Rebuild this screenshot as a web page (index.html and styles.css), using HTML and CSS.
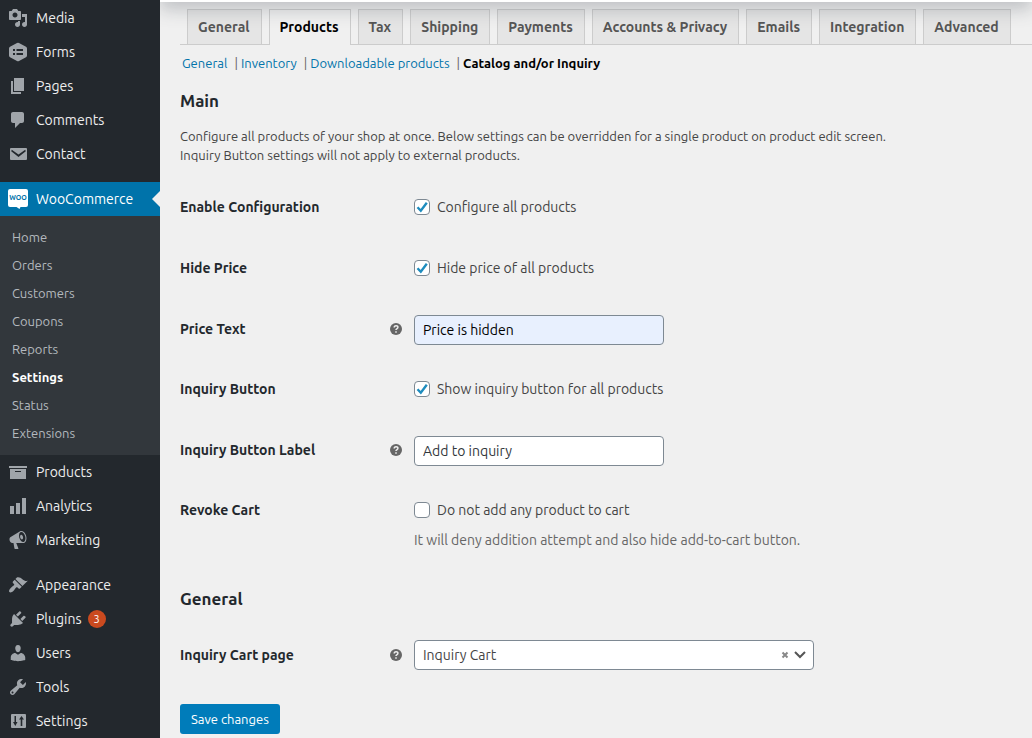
FILE: index.html
```html
<!DOCTYPE html>
<html lang="en">
<head>
<meta charset="utf-8">
<title>WooCommerce settings</title>
<link rel="stylesheet" href="styles.css">
</head>
<body>
<div class="layout">
  <nav class="sidebar" aria-label="Main menu">
    <ul class="menu">
      <li><a class="menu-link" href="#"><svg class="icon" viewBox="0 0 20 20"><path d="M13 11V4c0-.55-.45-1-1-1h-1.67L9 1H5L3.67 3H2c-.55 0-1 .45-1 1v7c0 .55.45 1 1 1h10c.55 0 1-.45 1-1zM7 4.5c1.38 0 2.5 1.12 2.5 2.5S8.38 9.5 7 9.5 4.5 8.38 4.5 7 5.62 4.5 7 4.5zM14 6h5v10.5c0 1.38-1.12 2.5-2.5 2.5S14 17.88 14 16.5s1.12-2.5 2.5-2.5c.17 0 .34.02.5.05V9h-3V6zm-4 8.05V13h2v3.5c0 1.38-1.12 2.5-2.5 2.5S7 17.88 7 16.5 8.12 14 9.5 14c.17 0 .34.02.5.05z"/></svg>Media</a></li>
      <li><a class="menu-link" href="#"><svg class="icon" viewBox="0 0 20 20"><path fill-rule="evenodd" d="M9 1.1q1-.5 2 0l7 3.6q1 .6 1 1.7v7.2q0 1.1-1 1.7l-7 3.6q-1 .5-2 0l-7-3.6q-1-.6-1-1.7V6.400q0-1.100 1-1.700zM5 7v2h2V7zm3.500 0v2H15V7zM5 11v2h2v-2zm3.500 0v2H15v-2z"/></svg>Forms</a></li>
      <li><a class="menu-link" href="#"><svg class="icon" viewBox="0 0 20 20"><path d="M6 15V2h10v13H6zm-1 1h8v2H3V5h2v11z"/></svg>Pages</a></li>
      <li><a class="menu-link" href="#"><svg class="icon" viewBox="0 0 20 20"><path d="M5 2h9c1.100 0 2 .9 2 2v7c0 1.100-.9 2-2 2h-2l-5 5v-5H5c-1.100 0-2-.9-2-2V4c0-1.100.9-2 2-2z"/></svg>Comments</a></li>
      <li><a class="menu-link" href="#"><svg class="icon" viewBox="0 0 20 20"><path fill-rule="evenodd" d="M3 4h15q1 0 1 1v10q0 1-1 1H3q-1 0-1-1V5q0-1 1-1zm.8 1.800-.6 1.500 7.300 5.700 7.300-5.700-.6-1.500-6.700 4.700z"/></svg>Contact</a></li>
      <li class="separated"><a class="menu-link current" href="#"><svg class="icon" viewBox="0 0 20 20"><path d="M2 0h16q2 0 2 2v14q0 2-2 2h-5.500l-1 2-3-2H2q-2 0-2-2V2q0-2 2-2z"/><text class="woo" x="10" y="11" text-anchor="middle">WOO</text></svg>WooCommerce</a>
        <ul class="submenu">
          <li><a href="#">Home</a></li>
          <li><a href="#">Orders</a></li>
          <li><a href="#">Customers</a></li>
          <li><a href="#">Coupons</a></li>
          <li><a href="#">Reports</a></li>
          <li><a class="active" href="#">Settings</a></li>
          <li><a href="#">Status</a></li>
          <li><a href="#">Extensions</a></li>
        </ul>
      </li>
      <li><a class="menu-link" href="#"><svg class="icon" viewBox="0 0 20 20"><path d="M19 4v2H1V4h18zM2 7h16v10H2V7zm11 3V9H7v1h6z"/></svg>Products</a></li>
      <li><a class="menu-link" href="#"><svg class="icon" viewBox="0 0 20 20"><path d="M18 18V2h-4v16h4zm-6 0V7H8v11h4zm-6 0v-8H2v8h4z"/></svg>Analytics</a></li>
      <li><a class="menu-link" href="#"><svg class="icon" viewBox="0 0 20 20"><path d="M18.150 5.940c.46 1.620.38 3.220-.02 4.480-.42 1.280-1.260 2.180-2.300 2.480-.16.06-.26.06-.4.06-.06.02-.12.02-.18.02-.06.02-.14.02-.22.02h-6.800l2.220 5.500c.02.14-.06.26-.14.34-.08.1-.24.16-.34.16H6.950c-.1 0-.26-.06-.34-.16-.08-.08-.16-.2-.14-.34l-1-5.500H4.250l-.02-.02c-.5.06-1.080-.18-1.540-.62s-.88-1.080-1.060-1.880c-.24-.8-.2-1.560-.02-2.200.18-.62.58-1.080 1.060-1.300l.02-.02 9-5.400c.1-.06.18-.1.24-.16.06-.04.14-.08.24-.12.16-.08.28-.12.5-.18 1.040-.3 2.240.1 3.220.98s1.840 2.240 2.260 3.860zm-2.580 5.980h-.02c.4-.1.74-.34 1.040-.7.58-.7.86-1.760.86-3.040 0-.64-.1-1.300-.28-1.980-.34-1.360-1.020-2.500-1.780-3.240s-1.680-1.100-2.460-.88c-.82.22-1.400.96-1.700 2-.32 1.040-.28 2.360.06 3.720.38 1.360 1 2.500 1.800 3.240.78.74 1.620 1.100 2.480.88zm-2.540-7.080c.22-.04.42-.02.62.04.38.16.76.48 1.020 1s.42 1.200.42 1.780c0 .3-.04.56-.12.8-.18.48-.44.84-.86.94-.34.1-.8-.06-1.140-.4s-.64-.86-.78-1.500c-.18-.62-.12-1.240.02-1.720s.48-.84.82-.94z"/></svg>Marketing</a></li>
      <li class="separated"><a class="menu-link" href="#"><svg class="icon" viewBox="0 0 20 20"><path d="M14.480 11.060L7.410 3.990l1.500-1.500c.5-.56 2.300-.47 3.510.32 1.210.8 1.430 1.280 2.910 2.100 1.180.64 2.450 1.260 4.450.85zm-.71.71L6.700 4.700 4.930 6.470c-.39.39-.39 1.020 0 1.410l1.060 1.060c.39.39.39 1.030 0 1.420-.6.6-1.430 1.110-2.210 1.690-.35.26-.7.53-1.010.84C1.430 14.230.4 16.080 1.400 17.070c.99 1 2.840-.03 4.180-1.360.31-.31.58-.66.85-1.020.57-.78 1.080-1.610 1.690-2.210.39-.39 1.020-.39 1.410 0l1.060 1.060c.39.39 1.020.39 1.410 0z"/></svg>Appearance</a></li>
      <li><a class="menu-link" href="#"><svg class="icon" viewBox="0 0 20 20"><path d="M13.110 4.360L9.870 7.600 8 5.730l3.240-3.240c.35-.34 1.050-.2 1.560.32.52.51.66 1.210.31 1.550zm-8 1.770l.91-1.120 9.010 9.010-1.190.84c-.71.71-2.630 1.160-3.820 1.160H6.140L4.900 17.260c-.59.59-1.540.59-2.120 0-.59-.58-.59-1.530 0-2.120l1.240-1.240v-3.880c0-1.130.4-3.190 1.090-3.890zm7.260 3.970l3.240-3.240c.34-.35 1.040-.21 1.550.31.52.51.66 1.210.31 1.550l-3.240 3.250z"/></svg>Plugins<span class="count">3</span></a></li>
      <li><a class="menu-link" href="#"><svg class="icon" viewBox="0 0 20 20"><path d="M10 9.250c-2.270 0-2.730-3.440-2.730-3.440C7 4.020 7.820 2 9.970 2c2.160 0 2.980 2.020 2.710 3.810 0 0-.41 3.440-2.680 3.440zm0 2.570L12.720 10c2.390 0 4.520 2.330 4.520 4.530v2.490s-3.650 1.130-7.240 1.130c-3.650 0-7.240-1.130-7.240-1.130v-2.490c0-2.250 1.940-4.480 4.470-4.480z"/></svg>Users</a></li>
      <li><a class="menu-link" href="#"><svg class="icon" viewBox="0 0 20 20"><path d="M16.680 9.770c-1.340 1.340-3.300 1.670-4.950.99l-5.410 6.520c-.99.99-2.590.99-3.580 0s-.99-2.590 0-3.570l6.520-5.420c-.68-1.650-.35-3.610.99-4.950 1.280-1.280 3.120-1.620 4.720-1.060l-2.890 2.890 2.820 2.820 2.860-2.870c.53 1.580.18 3.390-1.080 4.650zM3.810 16.210c.4.39 1.040.39 1.430 0 .4-.4.4-1.040 0-1.430-.39-.4-1.030-.4-1.430 0-.39.39-.39 1.030 0 1.430z"/></svg>Tools</a></li>
      <li><a class="menu-link" href="#"><svg class="icon" viewBox="0 0 20 20"><path fill-rule="evenodd" d="M4 3h13q1 0 1 1v12q0 1-1 1H4q-1 0-1-1V4q0-1 1-1zm2.500 2v6H5l2.300 4L9.500 11H8V5zm6.200 10h1.600V8.500H16L13.500 5 11 8.500h1.700z"/></svg>Settings</a></li>
    </ul>
  </nav>

  <div class="page">
    <div class="topbar"></div>
    <main class="content">
      <nav class="tabs" aria-label="Settings sections">
        <a class="tab" href="#">General</a>
        <a class="tab selected" href="#">Products</a>
        <a class="tab" href="#">Tax</a>
        <a class="tab" href="#">Shipping</a>
        <a class="tab" href="#">Payments</a>
        <a class="tab" href="#">Accounts &amp; Privacy</a>
        <a class="tab" href="#">Emails</a>
        <a class="tab" href="#">Integration</a>
        <a class="tab" href="#">Advanced</a>
      </nav>
      <ul class="subnav">
        <li><a href="#">General</a></li>
        <li><a href="#">Inventory</a></li>
        <li><a href="#">Downloadable products</a></li>
        <li><a class="active" href="#">Catalog and/or Inquiry</a></li>
      </ul>

      <form class="settings">
        <h2>Main</h2>
        <p class="intro">Configure all products of your shop at once. Below settings can be overridden for a single product on product edit screen.<br>Inquiry Button settings will not apply to external products.</p>

        <div class="rows">
          <div class="row">
            <span class="name">Enable Configuration</span>
            <label class="check"><input type="checkbox" checked>Configure all products</label>
          </div>
          <div class="row">
            <span class="name">Hide Price</span>
            <label class="check"><input type="checkbox" checked>Hide price of all products</label>
          </div>
          <div class="row field">
            <label class="name" for="price-text">Price Text</label>
            <svg class="help" viewBox="0 0 14 14"><circle cx="7" cy="7" r="6"/><path d="M5.200 5.600q0-1.900 1.900-1.900t1.800 1.600q0 1-1.100 1.500-.8.400-.8 1.200M7 9.300v1.400"/></svg>
            <input class="text filled" id="price-text" type="text" value="Price is hidden">
          </div>
          <div class="row">
            <span class="name">Inquiry Button</span>
            <label class="check"><input type="checkbox" checked>Show inquiry button for all products</label>
          </div>
          <div class="row field">
            <label class="name" for="button-label">Inquiry Button Label</label>
            <svg class="help" viewBox="0 0 14 14"><circle cx="7" cy="7" r="6"/><path d="M5.200 5.600q0-1.900 1.900-1.900t1.800 1.600q0 1-1.100 1.500-.8.400-.8 1.200M7 9.300v1.400"/></svg>
            <input class="text" id="button-label" type="text" value="Add to inquiry">
          </div>
          <div class="row noted">
            <span class="name">Revoke Cart</span>
            <label class="check"><input type="checkbox">Do not add any product to cart</label>
          </div>
        </div>
        <p class="note">It will deny addition attempt and also hide add-to-cart button.</p>

        <h2>General</h2>
        <div class="row cart">
          <label class="name" for="cart-page">Inquiry Cart page</label>
          <svg class="help" viewBox="0 0 14 14"><circle cx="7" cy="7" r="6"/><path d="M5.200 5.600q0-1.900 1.900-1.900t1.800 1.600q0 1-1.100 1.500-.8.400-.8 1.200M7 9.300v1.400"/></svg>
          <div class="picker">
            <select id="cart-page"><option>Inquiry Cart</option></select>
            <button class="clear" type="button" aria-label="Clear"><svg viewBox="0 0 8 8"><path d="M1.500 1.500l5 5M6.500 1.500l-5 5"/></svg></button>
            <svg class="chevron" viewBox="0 0 12 8"><path d="M1 1l5 5 5-5"/></svg>
          </div>
        </div>
        <button class="save" type="submit">Save changes</button>
      </form>
    </main>
  </div>
</div>
</body>
</html>
```
FILE: styles.css
```css
* { box-sizing: border-box; }

body {
  margin: 0;
  background: #f0f0f0;
  color: #444;
  font: 14px/20px Ubuntu, "Noto Sans", sans-serif;
}

ul { margin: 0; padding: 0; list-style: none; }
a { color: #0073aa; text-decoration: none; }
input, select, button { font: inherit; }

.layout { display: flex; min-height: 100vh; }

/* Sidebar */
.sidebar {
  position: relative;
  z-index: 2;
  flex: 0 0 160px;
  padding-top: 1px;
  background: #23282d;
}
.menu-link {
  display: flex;
  align-items: center;
  gap: 8px;
  height: 34px;
  padding-left: 8px;
  color: #eee;
}
.icon { flex: none; width: 20px; height: 20px; fill: #a0a5aa; }
.separated { margin-top: 11px; }
.current { position: relative; background: #0073aa; color: #fff; }
.current .icon { fill: #fff; }
.current::after {
  content: "";
  position: absolute;
  top: 9px;
  right: 0;
  border: 8px solid transparent;
  border-right-color: #f0f0f0;
  border-left: 0;
}
.icon .woo { fill: #0073aa; font-size: 7px; font-weight: 700; }
.count {
  width: 18px;
  height: 18px;
  margin-left: -2px;
  border-radius: 9px;
  background: #ca4a1f;
  color: #fff;
  font-size: 11px;
  line-height: 18px;
  text-align: center;
}
.submenu { padding: 7px 0 8px; background: #32373c; }
.submenu a {
  display: block;
  padding-left: 12px;
  color: #b4b9be;
  font-size: 13px;
  line-height: 28px;
}
.submenu .active { color: #fff; font-weight: 700; }

/* Page */
.page { position: relative; flex: 1; min-width: 0; overflow: hidden; }
.topbar {
  position: absolute;
  top: -58px;
  left: 0;
  right: 0;
  z-index: 1;
  height: 60px;
  background: #fff;
  box-shadow: 0 8px 16px 0 rgba(85, 93, 102, 0.3);
  pointer-events: none;
}
.content { padding: 9px 0 0 20px; }

.tabs {
  display: flex;
  gap: 7px;
  padding-left: 7px;
  border-bottom: 1px solid #ccc;
}
.tab {
  padding: 7px 11px 7px 10px;
  border: 1px solid #ccc;
  border-bottom: 0;
  background: #e5e5e5;
  color: #555;
  font-weight: 700;
  white-space: nowrap;
}
.tab.selected { margin-bottom: -1px; background: #f0f0f0; color: #000; }

.subnav { display: flex; padding: 8px 0 0 2px; font-size: 13px; }
.subnav li + li::before { content: "|"; margin: 0 3px 0 7px; color: #666; }
.subnav .active { color: #000; font-weight: 700; }

h2 { margin: 0; color: #23282d; font-size: 17px; line-height: 24px; }
.settings > h2:first-child { padding-top: 16px; }
.intro { margin: 14px 0 0; font-size: 13px; line-height: 19px; }

.rows { padding-top: 11px; }
.row {
  display: grid;
  grid-template-columns: 209px 14px auto;
  align-items: center;
  height: 61px;
}
.field { height: 60px; padding-top: 2px; }
.noted { height: 51px; padding-top: 11px; }
.name { color: #23282d; font-weight: 700; }
.help { width: 14px; height: 14px; fill: #666; }
.help path { fill: none; stroke: #f0f0f0; stroke-width: 1.5; }
.check { display: flex; align-items: center; gap: 7px; grid-column: 3; margin-left: 11px; }

input[type="checkbox"] {
  appearance: none;
  width: 16px;
  height: 16px;
  margin: 0;
  border: 1px solid #7e8993;
  border-radius: 4px;
  background: #fff;
}
input[type="checkbox"]:checked {
  background: #fff url("data:image/svg+xml,%3Csvg xmlns='http://www.w3.org/2000/svg' viewBox='0 0 14 14'%3E%3Cpath d='M2.500 7.200l3.300 3.500 6-8' fill='none' stroke='%231e8cbe' stroke-width='2.400'/%3E%3C/svg%3E") center / 14px 14px;
}
.text {
  width: 250px;
  height: 30px;
  margin: 2px 0 0 11px;
  padding: 0 8px;
  border: 1px solid #7e8993;
  border-radius: 4px;
  background: #fff;
  color: #32373c;
}
.text.filled { background: #e8f0fe; color: #000; }
.note { margin: 0 0 0 234px; color: #666; }

.note + h2 { margin-top: 37px; }
.cart { height: 30px; margin: 29px 0 34px; }
.picker { position: relative; width: 400px; margin-left: 11px; }
.picker select {
  display: block;
  appearance: none;
  width: 100%;
  height: 30px;
  padding: 0 8px;
  border: 1px solid #7e8993;
  border-radius: 4px;
  background: #fff;
  color: #444;
}
.clear {
  position: absolute;
  top: 11px;
  right: 25px;
  width: 8px;
  height: 8px;
  padding: 0;
  border: 0;
  background: none;
}
.clear svg { display: block; fill: none; stroke: #888; stroke-width: 2; }
.chevron {
  position: absolute;
  top: 11px;
  right: 8px;
  width: 12px;
  height: 8px;
  fill: none;
  stroke: #555;
  stroke-width: 2;
  pointer-events: none;
}
.save {
  height: 30px;
  padding: 0 11px;
  border: 0;
  border-radius: 3px;
  background: #007cba;
  color: #fff;
  font-size: 13px;
}
```
